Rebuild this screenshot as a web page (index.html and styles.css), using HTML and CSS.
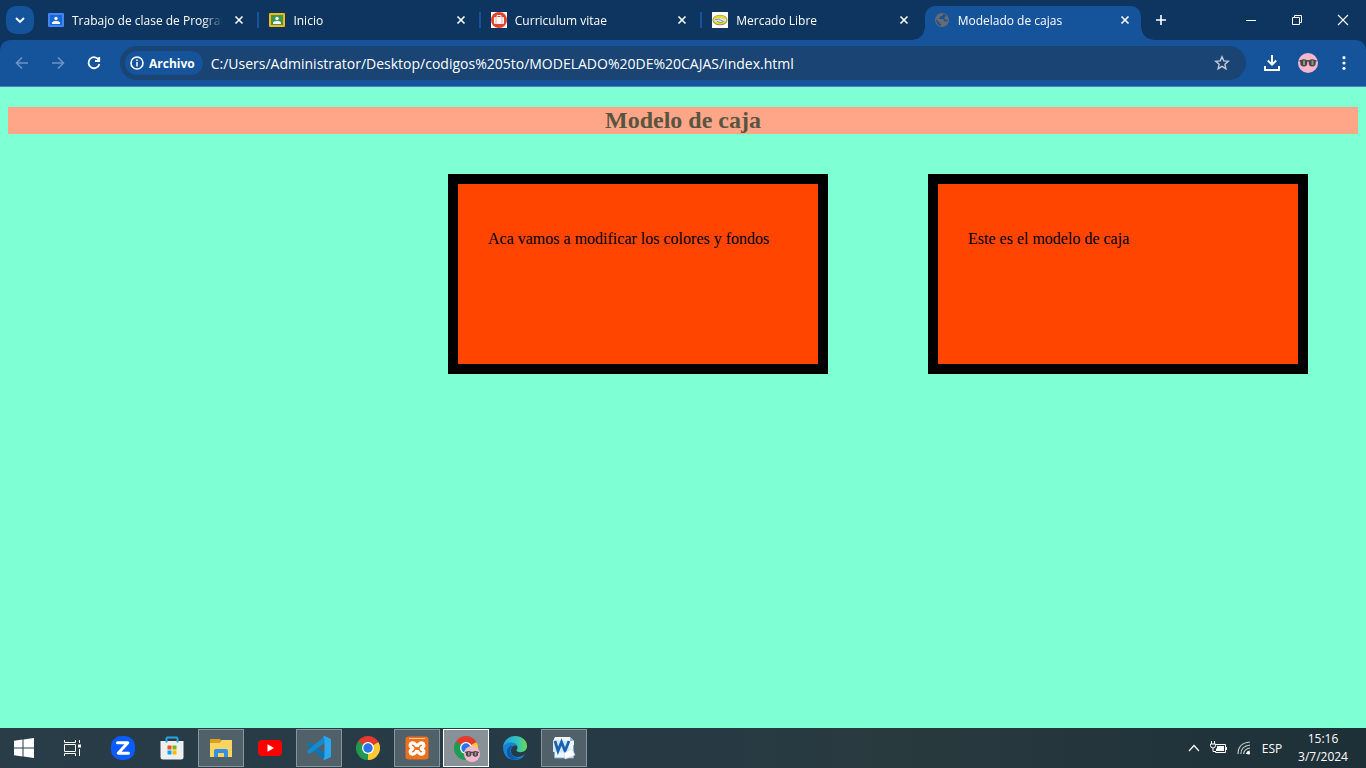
FILE: index.html
```
<!DOCTYPE html>
<html lang="es">
<head>
<meta charset="utf-8">
<title>Modelado de cajas</title>
<link rel="stylesheet" href="styles.css">
</head>
<body>
<svg class="defs" aria-hidden="true">
  <symbol id="close" viewBox="0 0 16 16"><path d="M4.5 4.5l7 7M11.5 4.5l-7 7" fill="none" stroke="#fff" stroke-width="1.6"/></symbol>
  <symbol id="chrome" viewBox="0 0 24 24">
    <path d="M12 12L1.6 6A12 12 0 0 1 22.4 6z" fill="#e33b2e"/>
    <path d="M12 12L22.4 6A12 12 0 0 1 12 24z" fill="#fcc934"/>
    <path d="M12 12V24A12 12 0 0 1 1.6 6z" fill="#1e9b50"/>
    <path d="M12 6h10.4a12 12 0 0 1 .3.6H12z" fill="#e33b2e"/>
    <path d="M7 15L1.6 6 7 8zM6.8 15l5 2.7V24z" fill="#1e9b50"/>
    <path d="M17.2 15L12 24l0-6.5z" fill="#fcc934"/>
    <circle cx="12" cy="12" r="6" fill="#fff"/><circle cx="12" cy="12" r="4.7" fill="#2874e8"/>
  </symbol>
  <symbol id="avatar" viewBox="0 0 20 20">
    <circle cx="10" cy="10" r="10" fill="#f8b6cc"/>
    <path d="M1.5 7.2q4-1.500 8.500 0 4.500-1.500 8.500 0v1.500h-17z" fill="#4b4847"/>
    <circle cx="5.800" cy="10" r="3.500" fill="#45484a"/><circle cx="14.200" cy="10" r="3.500" fill="#45484a"/>
    <path d="M6 7.500v4.500M14.500 7.500v4.500" stroke="#8d9391" stroke-width="2"/>
  </symbol>
</svg>
<header class="browser">
  <div class="strip">
    <button class="search-tabs" aria-label="Buscar pestañas"><svg width="16" height="16" viewBox="0 0 16 16"><path d="M4 6l4 4 4-4" fill="none" stroke="#fff" stroke-width="1.900"/></svg></button>
    <nav class="tabs" aria-label="Pestañas">
      <div class="tab">
        <svg class="favicon" viewBox="0 0 16 16"><rect y="1" width="16" height="14" rx="1" fill="#4285f4"/><rect x="2" y="3" width="12" height="10" fill="#1967d2"/><circle cx="8" cy="6.500" r="1.700" fill="#fff"/><path d="M4 12v-1q0-2 4-2t4 2v1z" fill="#fff"/></svg>
        <a class="tab-title" href="#">Trabajo de clase de Programa</a>
        <button class="close" aria-label="Cerrar"><svg width="16" height="16"><use href="#close"/></svg></button>
      </div>
      <div class="tab">
        <svg class="favicon" viewBox="0 0 16 16"><rect y="1" width="16" height="14" rx="1" fill="#f7b90a"/><rect x="2" y="3" width="12" height="10" fill="#3f9554"/><circle cx="8" cy="6.500" r="1.700" fill="#fff"/><path d="M4 12v-1q0-2 4-2t4 2v1z" fill="#fff"/></svg>
        <a class="tab-title" href="#">Inicio</a>
        <button class="close" aria-label="Cerrar"><svg width="16" height="16"><use href="#close"/></svg></button>
      </div>
      <div class="tab">
        <svg class="favicon" viewBox="0 0 16 16"><rect width="16" height="16" fill="#fff"/><circle cx="8" cy="8" r="8" fill="#e2432c"/><rect x="3" y="5" width="10" height="7" rx="1" fill="#fff"/><path d="M6 5V3.500h4V5" fill="none" stroke="#fff"/><path d="M5 5v7M11 5v7" stroke="#e2432c" stroke-width=".5"/></svg>
        <a class="tab-title" href="#">Curriculum vitae</a>
        <button class="close" aria-label="Cerrar"><svg width="16" height="16"><use href="#close"/></svg></button>
      </div>
      <div class="tab">
        <svg class="favicon" viewBox="0 0 16 16"><rect width="16" height="16" fill="#fff"/><ellipse cx="8" cy="8" rx="7.500" ry="5.300" fill="#77784d"/><ellipse cx="8" cy="7.900" rx="6.900" ry="4.700" fill="#e6da25"/><path d="M2 6.500q2.500.8 4-.2 2-1.200 4 0 1.500.8 4 .2v2q-2 2-6 2T2 8.500z" fill="#d9e0e8"/><path d="M3 7.500q2 .5 4-.5l1.500 1 3 1.500-1 .7-2.500.3-3-1.200" fill="none" stroke="#7d88a0" stroke-width=".8"/></svg>
        <a class="tab-title" href="#">Mercado Libre</a>
        <button class="close" aria-label="Cerrar"><svg width="16" height="16"><use href="#close"/></svg></button>
      </div>
      <div class="tab active">
        <svg class="favicon" viewBox="0 0 16 16"><circle cx="8" cy="8" r="7" fill="#686b70"/><path d="M9 1.800v1q0 1.200-1.400 1.200H6.200v1.500L4.800 7h4q1 0 1 1v1.200h1.700q1 0 1.300.8 1-1.200 1-2.500l-1.300.5L10.500 7V5l2-1.200Q11 2.200 9 1.800zM2 7l3.500 3.500v1.200h1.600v2.100Q2.500 13.300 2 7z" fill="#15539b"/></svg>
        <a class="tab-title" href="#" aria-current="page">Modelado de cajas</a>
        <button class="close" aria-label="Cerrar"><svg width="16" height="16"><use href="#close"/></svg></button>
      </div>
    </nav>
    <button class="new-tab" aria-label="Nueva pestaña"><svg width="16" height="16" viewBox="0 0 16 16"><path d="M8 3v10M3 8h10" stroke="#fff" stroke-width="1.600"/></svg></button>
    <div class="window-controls">
      <button aria-label="Minimizar"><svg width="12" height="12"><path d="M1 6.500h10" stroke="#fff"/></svg></button>
      <button aria-label="Restaurar"><svg width="12" height="12"><path d="M1.500 3.500h7v7h-7zM3.500 3V1.500h7v7H9" fill="none" stroke="#fff"/></svg></button>
      <button aria-label="Cerrar ventana"><svg width="12" height="12"><path d="M1 1l10 10M11 1L1 11" stroke="#fff" stroke-width="1.100"/></svg></button>
    </div>
  </div>
  <div class="toolbar">
    <div class="history">
      <button aria-label="Atrás"><svg width="16" height="16"><path d="M14 8H3M8 2.500L2.500 8 8 13.500" fill="none" stroke="#6c94c7" stroke-width="1.600"/></svg></button>
      <button aria-label="Adelante"><svg width="16" height="16"><path d="M2 8h11M8 2.500L13.500 8 8 13.500" fill="none" stroke="#6c94c7" stroke-width="1.600"/></svg></button>
      <button aria-label="Recargar"><svg width="16" height="16"><path d="M13 5.300A5.500 5.500 0 1 0 13.400 9M13.200 2v4H9" fill="none" stroke="#fff" stroke-width="1.800"/></svg></button>
    </div>
    <div class="omnibox">
      <button class="chip"><svg width="14" height="14"><circle cx="7" cy="7" r="6" fill="none" stroke="#fff" stroke-width="1.600"/><path d="M7 6v4.500M7 3.500V5" stroke="#fff" stroke-width="1.500"/></svg>Archivo</button>
      <input class="url" type="text" aria-label="Dirección" value="C:/Users/Administrator/Desktop/codigos%205to/MODELADO%20DE%20CAJAS/index.html">
      <button class="star" aria-label="Agregar a favoritos"><svg width="16" height="16"><path d="M8 1.800l1.800 4.100 4.500.4-3.400 3 1 4.400L8 11.400l-3.900 2.300 1-4.400-3.400-3 4.500-.4z" fill="none" stroke="#c3cbd4" stroke-width="1.400"/></svg></button>
    </div>
    <div class="actions">
      <button aria-label="Descargas"><svg width="18" height="18"><path d="M9 1v9.500M4.800 6.500L9 10.700l4.200-4.200M2 12v4h14v-4" fill="none" stroke="#fff" stroke-width="1.900"/></svg></button>
      <button aria-label="Perfil"><svg width="20" height="20"><use href="#avatar"/></svg></button>
      <button aria-label="Menú"><svg width="16" height="16"><g fill="#fff"><circle cx="8" cy="2.700" r="1.600"/><circle cx="8" cy="8" r="1.600"/><circle cx="8" cy="13.300" r="1.600"/></g></svg></button>
    </div>
  </div>
</header>
<main class="page">
  <h2 class="heading">Modelo de caja</h2>
  <div class="boxes">
    <section class="box"><p>Aca vamos a modificar los colores y fondos</p></section>
    <section class="box"><p>Este es el modelo de caja</p></section>
  </div>
</main>
<footer class="taskbar">
  <div class="system">
    <button aria-label="Inicio de Windows"><svg width="20" height="20"><path d="M0 2.800l8.500-1.200v8H0zM9.500 1.400L20 0v9.600H9.500zM0 10.500h8.500v8L0 17.300zM9.500 10.500H20V20L9.500 18.600z" fill="#fff"/></svg></button>
    <button aria-label="Vista de tareas"><svg width="17" height="16"><path d="M.5 0v2.500h11V0M.5 16v-2.500h11V16M.5 4.500h11v7H.5zM15.500 0v3M15.500 9v7" fill="none" stroke="#fff"/><path d="M14 4.500h3v3h-3z" fill="#fff"/></svg></button>
  </div>
  <nav class="apps" aria-label="Aplicaciones">
    <button aria-label="Zoom"><svg width="24" height="24"><rect width="24" height="24" rx="10" fill="#0b5cff"/><path d="M6.500 6.800h10.300L7.200 17.200h10.300" fill="none" stroke="#fff" stroke-width="3" stroke-linejoin="round" stroke-linecap="round"/></svg></button>
    <button aria-label="Tienda"><svg width="24" height="24"><path d="M.5 5h23v16q0 2.500-2.500 2.500H3Q.5 23.500.5 21z" fill="#efefef"/><path d="M6.500 6.500V2.500q0-1 1-1h9q1 0 1 1v4" fill="none" stroke="#26a5df" stroke-width="2"/><path d="M7.500 9.500h4v4h-4z" fill="#f05022"/><path d="M12.500 9.500h4v4h-4z" fill="#7fba00"/><path d="M7.500 14.500h4v4h-4z" fill="#00a4ef"/><path d="M12.500 14.500h4v4h-4z" fill="#ffb900"/></svg></button>
    <button class="open" aria-label="Explorador"><svg width="24" height="24"><path d="M1 6h10l1.500-2H23v17H1z" fill="#fcd462"/><path d="M1 3h10l1 1-1 3H1z" fill="#dda018"/><path d="M5 21v-6q0-2 2-2h10q2 0 2 2v6h-4v-4H9v4z" fill="#3191e2"/></svg></button>
    <button aria-label="YouTube"><svg width="24" height="18"><rect y="1" width="24" height="16" rx="4" fill="#f00"/><path d="M9.500 5.200v7.600L16 9z" fill="#fff"/></svg></button>
    <button class="open" aria-label="Visual Studio Code"><svg width="24" height="24"><path d="M.3 7.700L2.500 6 18 17.500V24L.3 9.300z" fill="#0877b9"/><path d="M.3 16.300L2.500 18 18 6.500V0L.3 14.700z" fill="#168ad0"/><path d="M17.500 0L24 3v18l-6.500 3-1.500-1 1.500-1.500v-19L16 1z" fill="#2ba7ef"/></svg></button>
    <button aria-label="Chrome"><svg width="24" height="24"><use href="#chrome"/></svg></button>
    <button class="open" aria-label="XAMPP"><svg width="24" height="24"><rect x=".5" y=".5" width="23" height="23" rx="3" fill="#ed711d"/><path d="M4 2.500h16" stroke="#fac49a"/><path d="M7.500 5.700q2.500 0 4.500 2.500 2-2.500 4.500-2.500 3.500 0 3.500 3.300 0 2-1.500 3.500 1.500 1.500 1.500 3.500 0 3.300-3.500 3.300-2.500 0-4.500-2.500-2 2.500-4.500 2.500-3.500 0-3.500-3.300 0-2 1.500-3.500Q4 11 4 9q0-3.300 3.500-3.300z" fill="#fff" stroke="#fff" stroke-linejoin="round"/><path d="M7.700 9.200q1 0 2.300 2.600h4q1.300-2.600 2.300-2.600M7.700 15.800q1 0 2.300-2.600h4q1.300 2.600 2.300 2.600" fill="none" stroke="#ed711d" stroke-width="1.500" stroke-linecap="round"/></svg></button>
    <button class="open current" aria-label="Chrome, Modelado de cajas"><svg width="24" height="24"><use href="#chrome"/></svg><svg class="profile" width="16" height="16"><use href="#avatar"/></svg></button>
    <button aria-label="Edge"><svg width="24" height="24" viewBox="0 0 24 24"><defs><linearGradient id="e1"><stop stop-color="#249fe2"/><stop offset=".6" stop-color="#30c4bd"/><stop offset="1" stop-color="#6edb50"/></linearGradient></defs><path d="M0 11.500A12 12 0 0 1 12 0c7 0 12 4.500 12 10 0 4-3 6.200-6.500 6.200-3 0-4-1-4-1.900 0-.7 1-1.200 1-2.800 0-2-2-4-5-4Q3 7.500 0 11.500z" fill="url(#e1)"/><path d="M0 12q1.500-5.500 8-5.500 4.500 0 6 3-5-.5-6 4-.8 6 6 7.500 4 .5 8-3-3 6-10 6Q1 24 0 12z" fill="#1683d5"/><path d="M10 9.500q-4 3-2 7.500 3 6 9 5-4 2.300-8.500 1.200Q3 20.500 4 14q1-4 6-4.500z" fill="#0d5aa5"/></svg></button>
    <button class="open" aria-label="Word"><svg width="24" height="24"><path d="M3 1h15l4 4v17H2V3z" fill="#eff5fb"/><path d="M18 1v4h4z" fill="#91b7df"/><path d="M2.500 4v18h19V9" fill="none" stroke="#7faad8"/><path d="M1 4l16 1v12L1 16z" fill="#d4e5f6"/><path d="M3 5l3 10L9.500 6l3.500 9 4-10" fill="none" stroke="#1762b0" stroke-width="2.700"/><path d="M12 17l8-4 3 6-10 4z" fill="#fff" stroke="#c5d8ee" stroke-width=".6"/></svg></button>
  </nav>
  <div class="tray">
    <button aria-label="Mostrar iconos ocultos"><svg width="12" height="12"><path d="M1 9l5-5.500L11 9" fill="none" stroke="#fff" stroke-width="1.200"/></svg></button>
    <button aria-label="Batería"><svg width="17" height="14"><path d="M6 3.500h9.500v8H5.500V10" fill="none" stroke="#fff"/><path d="M7 5h7v5H6V8l1-1zM16 6h1v3h-1z" fill="#fff"/><path d="M1.500 0v3M4.500 0v3M3 7v3.500h2" fill="none" stroke="#fff"/><path d="M.5 3h5v1.500Q5.500 7 3 7T.5 4.500z" fill="#273b42" stroke="#fff"/></svg></button>
    <button aria-label="Red inalámbrica"><svg width="14" height="14"><g fill="none" stroke="#c1c9cc" stroke-width="1.200"><path d="M1 13Q1 2 13 1M3.800 13Q4 5 13 4M6.600 13Q7 8 13 7"/></g><path d="M9.500 13q0-3 3.500-3" fill="none" stroke="#fff"/><circle cx="11.500" cy="12" r="1.600" fill="#fff"/></svg></button>
    <button class="lang">ESP</button>
    <button class="clock"><time>15:16</time><span>3/7/2024</span></button>
  </div>
</footer>
</body>
</html>
```
FILE: styles.css
```
* { box-sizing: border-box; }
body {
  margin: 0;
  min-height: 100vh;
  display: flex;
  flex-direction: column;
  background: #7fffd4;
  font-family: "Open Sans", "Noto Sans", sans-serif;
  font-size: 12px;
  color: #fff;
}
svg { display: block; flex: none; }
.defs { position: absolute; width: 0; height: 0; }
button {
  display: flex;
  align-items: center;
  justify-content: center;
  padding: 0;
  border: 0;
  background: none;
  color: inherit;
  font: inherit;
}

.browser { background: #0d355f; }
.strip { display: flex; height: 40px; padding-left: 6px; }
.search-tabs {
  flex: none;
  width: 28px;
  height: 28px;
  margin: 6px 4px 0 0;
  border-radius: 10px;
  background: #15539b;
}
.tabs { display: flex; flex: 0 1 1109px; min-width: 0; }
.tab {
  position: relative;
  z-index: 0;
  display: flex;
  align-items: center;
  flex: 1 1 0;
  min-width: 0;
  padding: 0 12px 0 10px;
}
.tab::after {
  content: "";
  position: absolute;
  right: 0;
  top: 12px;
  width: 2px;
  height: 16px;
  background: #15539b;
}
.tab:nth-last-child(-n+2)::after { display: none; }
.tab.active { padding-right: 14px; }
.active::before {
  content: "";
  position: absolute;
  z-index: -1;
  inset: 6px 6px 0 1px;
  border-radius: 10px 10px 0 0;
  background: #15539b;
}
.tab.active::after {
  display: block;
  z-index: -1;
  top: 28px;
  left: -11px;
  right: -6px;
  width: auto;
  height: 12px;
  background:
    radial-gradient(circle at 0 0, transparent 11px, #15539b 12px) left / 12px 12px no-repeat,
    radial-gradient(circle at 100% 0, transparent 11px, #15539b 12px) right / 12px 12px no-repeat;
}
.favicon { width: 16px; height: 16px; }
.tab-title {
  flex: 1;
  min-width: 0;
  margin: 0 0 0 8px;
  overflow: hidden;
  white-space: nowrap;
  color: #fff;
  text-decoration: none;
  mask-image: linear-gradient(to left, transparent 8px, #000 28px);
}
.close { width: 16px; height: 16px; }
.new-tab { width: 28px; flex: none; }
.window-controls { display: flex; margin-left: auto; }
.window-controls button { width: 46px; }

.toolbar {
  display: flex;
  align-items: center;
  height: 47px;
  padding: 0 4px;
  border-bottom: 1px solid #4d80bc;
  border-radius: 10px 10px 0 0;
  background: #15539b;
}
.history { display: flex; padding-right: 8px; }
.history button, .actions button { width: 36px; height: 34px; }
.omnibox {
  display: flex;
  align-items: center;
  flex: 1;
  min-width: 0;
  height: 34px;
  padding: 0 16px 0 5px;
  border-radius: 17px;
  background: #194474;
}
.chip {
  gap: 5px;
  height: 24px;
  padding: 0 8px 0 5px;
  border-radius: 12px;
  background: #15539b;
  font-weight: 700;
}
.url {
  flex: 1;
  min-width: 0;
  padding: 0 8px;
  border: 0;
  outline: 0;
  background: none;
  color: #fff;
  font-family: inherit;
  font-size: 14px;
}
.actions { display: flex; padding-left: 8px; }

.page {
  flex: 1;
  padding: 20px 8px;
  font-family: "Liberation Serif", serif;
  font-size: 16px;
  color: #000;
}
.heading {
  margin: 0;
  background: #ffa689;
  color: #5b5440;
  font-size: 24px;
  line-height: 27px;
  text-align: center;
}
.boxes {
  display: flex;
  flex-wrap: wrap;
  justify-content: flex-end;
  gap: 100px;
  padding: 40px 50px;
}
.box {
  width: 380px;
  min-height: 200px;
  padding: 30px;
  border: 10px solid #000;
  background: #ff4500;
}
.box p { margin: 16px 0; }

.taskbar {
  display: flex;
  height: 40px;
  background: linear-gradient(90deg, #293d49, #263a45 45%, #293a3f 65%, #1d3038);
}
.system { display: flex; }
.system button { width: 48px; }
.apps { display: flex; gap: 3px; padding: 1px 0 1px 4px; }
.apps button { position: relative; width: 46px; }
.apps .open { border: 1px solid #89959a; background: #50616a; }
.apps .current { border-color: #fff; background: #879196; }
.profile { position: absolute; right: 8px; bottom: 4px; }
.tray { display: flex; margin-left: auto; padding-right: 15px; }
.tray button { width: 25px; }
.tray .lang { width: 32px; }
.tray .clock {
  flex-direction: column;
  width: 56px;
  margin-left: 7px;
  line-height: 18px;
  white-space: nowrap;
}
```
